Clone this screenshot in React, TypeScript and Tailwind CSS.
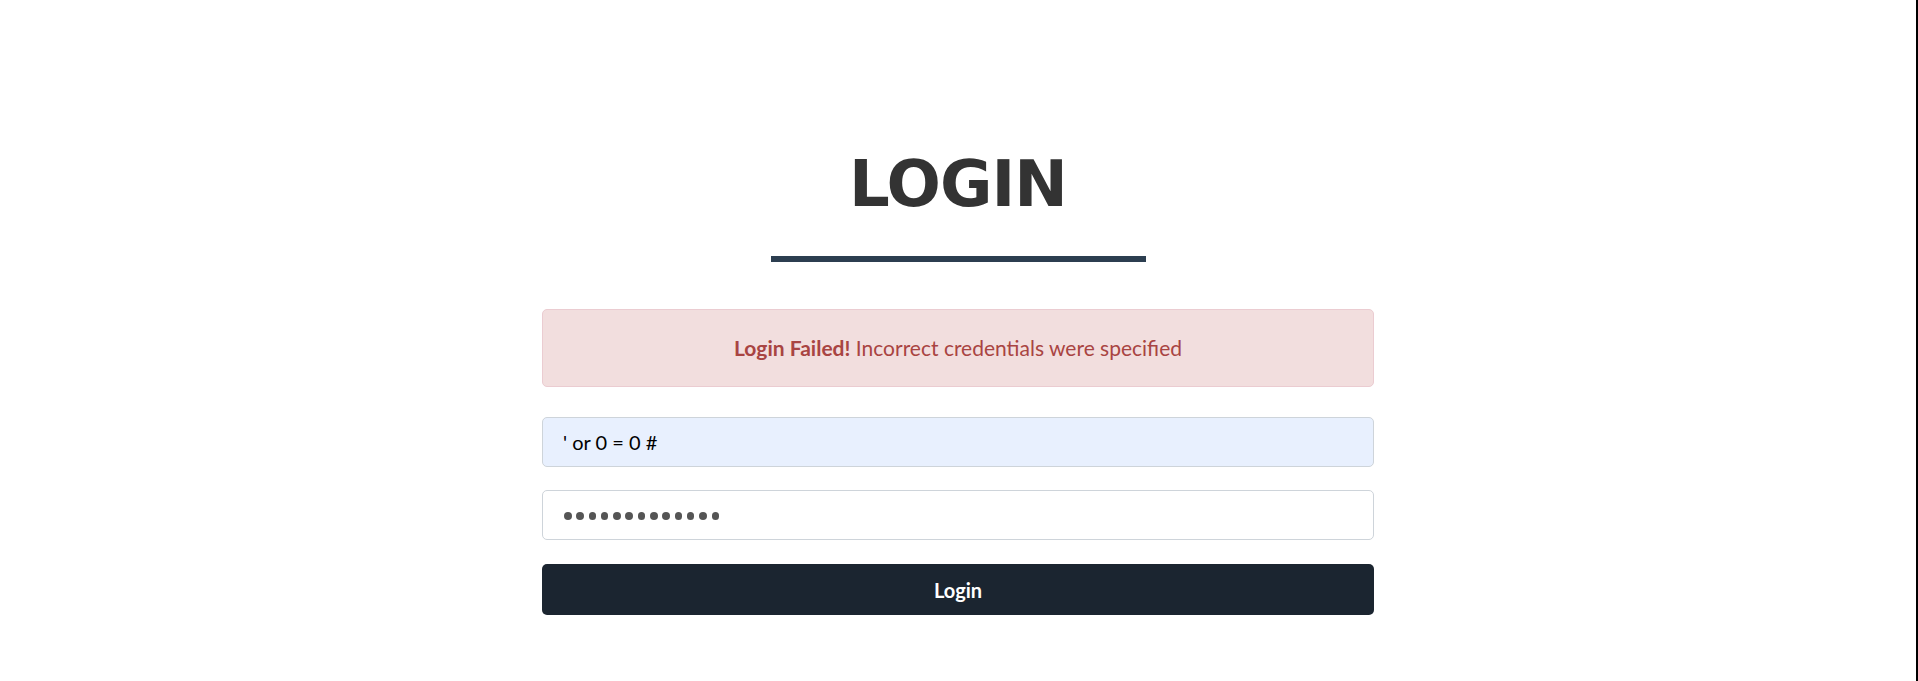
import React from 'react';

const lato = { fontFamily: 'Lato, "Open Sans", sans-serif' };

export default function App() {
  const dots = Array.from({ length: 13 });
  return (
    <div
      className="min-h-screen bg-white border-r-2 border-black flex flex-col items-center"
      style={lato}
    >
      <div className="w-[832px] flex flex-col items-center pt-[150px]">
        <h1
          className="text-[64px] leading-[68px] font-bold text-[#333333] tracking-[-1px]"
          style={{ fontFamily: '"DejaVu Sans", Verdana, sans-serif' }}
        >
          LOGIN
        </h1>
        <div className="mt-[38px] w-[375px] h-[6px] bg-[#2c3e50]" />

        <div className="mt-[47px] w-full h-[78px] rounded-[5px] border border-[#ebccd1] bg-[#f2dede] text-[#a94442] text-[21px] flex items-center justify-center">
          <span>
            <strong className="font-bold">Login Failed!</strong> Incorrect credentials were specified
          </span>
        </div>

        <form className="mt-[30px] w-full flex flex-col" onSubmit={(e) => e.preventDefault()}>
          <input
            type="text"
            defaultValue="' or 0 = 0 #"
            className="h-[50px] w-full rounded-[5px] border border-[#ced4da] bg-[#e8f0fe] px-[20px] text-[20px] text-black outline-none"
            style={lato}
          />
          <div className="mt-[23px] h-[50px] w-full rounded-[5px] border border-[#ced4da] bg-white pl-[21px] pt-[2px] flex items-center gap-[4.8px]">
            {dots.map((_, i) => (
              <span key={i} className="w-[7.5px] h-[7.5px] rounded-full bg-[#555555]" />
            ))}
          </div>
          <button
            type="submit"
            className="mt-[24px] h-[51px] w-full rounded-[5px] bg-[#1b2530] text-white text-[20px] font-bold"
            style={lato}
          >
            Login
          </button>
        </form>
      </div>
    </div>
  );
}
